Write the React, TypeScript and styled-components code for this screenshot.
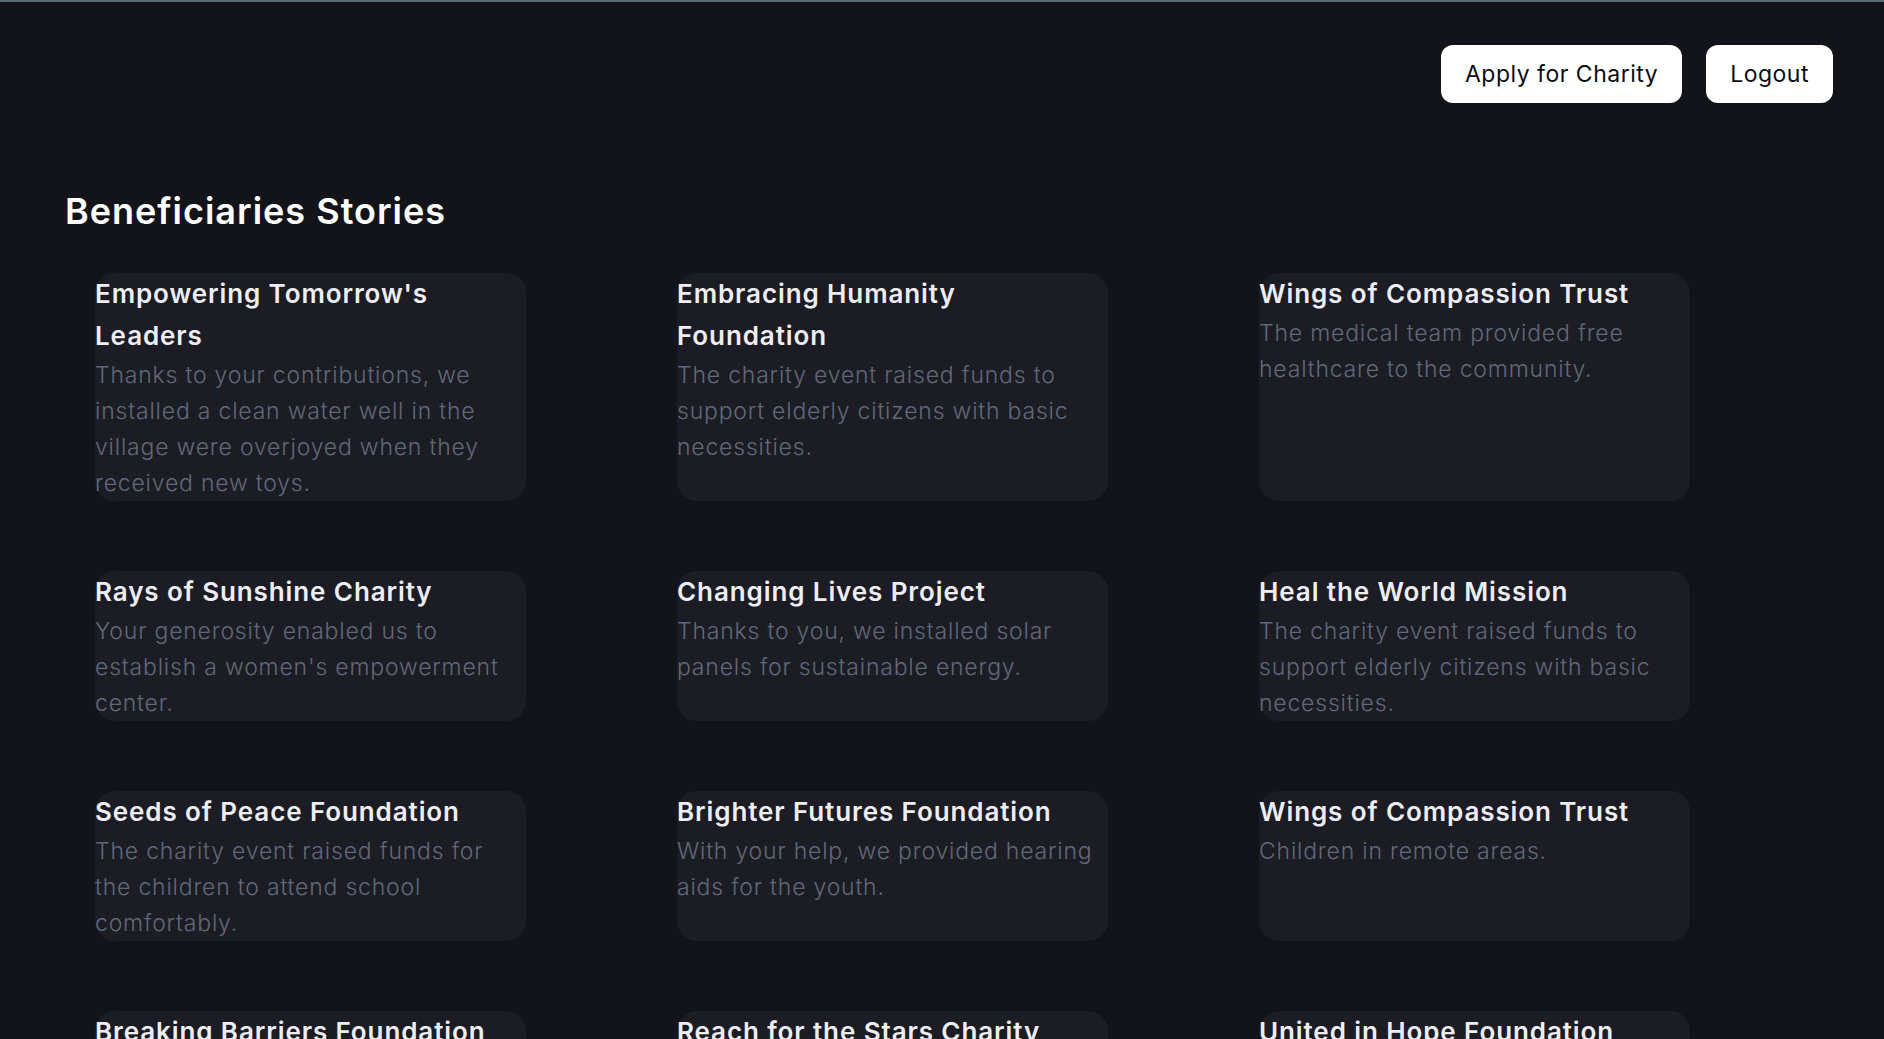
import React from "react";
import styled, { createGlobalStyle } from "styled-components";

const GlobalStyle = createGlobalStyle`
  html, body {
    margin: 0;
    padding: 0;
    background: #13141a;
  }
  body {
    border-top: 2px solid #5b6a72;
    font-family: Inter, "Noto Sans", sans-serif;
    color: #eeeef2;
    min-height: 100vh;
    box-sizing: border-box;
  }
  * { box-sizing: border-box; }
`;

const Page = styled.div`
  display: flex;
  flex-direction: column;
  min-height: 100vh;
`;

const TopBar = styled.header`
  display: flex;
  justify-content: flex-end;
  gap: 24px;
  padding: 43px 51px 0 0;
`;

const PillButton = styled.button`
  height: 58px;
  padding: 0 24px;
  border: none;
  border-radius: 12px;
  background: #ffffff;
  color: #0b0b14;
  font-family: Inter, "Noto Sans", sans-serif;
  font-size: 23px;
  letter-spacing: 0.5px;
  font-weight: 400;
  cursor: pointer;
`;

const Content = styled.main`
  padding: 0 65px 40px;
`;

const SectionTitle = styled.h2`
  margin: 86px 0 40px;
  font-size: 36px;
  line-height: 44px;
  font-weight: 600;
  color: #ffffff;
  letter-spacing: 1px;
`;

const StoryGrid = styled.div`
  display: grid;
  grid-template-columns: repeat(3, 431px);
  column-gap: 151px;
  row-gap: 70px;
  padding-left: 30px;
`;

const StoryCard = styled.article`
  background: #1c1c24;
  border-radius: 20px;
  display: flex;
  flex-direction: column;
`;

const StoryTitle = styled.h3`
  margin: 0;
  font-size: 26px;
  line-height: 42px;
  font-weight: 600;
  color: #eeeef2;
  letter-spacing: 0.9px;
`;

const StoryText = styled.p`
  margin: 0;
  font-size: 23px;
  line-height: 36px;
  font-weight: 300;
  color: #626879;
  letter-spacing: 0.8px;
`;

type Story = { title: string; text: string };

const stories: Story[] = [
  {
    title: "Empowering Tomorrow's Leaders",
    text: "Thanks to your contributions, we installed a clean water well in the village were overjoyed when they received new toys.",
  },
  {
    title: "Embracing Humanity Foundation",
    text: "The charity event raised funds to support elderly citizens with basic necessities.",
  },
  {
    title: "Wings of Compassion Trust",
    text: "The medical team provided free healthcare to the community.",
  },
  {
    title: "Rays of Sunshine Charity",
    text: "Your generosity enabled us to establish a women's empowerment center.",
  },
  {
    title: "Changing Lives Project",
    text: "Thanks to you, we installed solar panels for sustainable energy.",
  },
  {
    title: "Heal the World Mission",
    text: "The charity event raised funds to support elderly citizens with basic necessities.",
  },
  {
    title: "Seeds of Peace Foundation",
    text: "The charity event raised funds for the children to attend school comfortably.",
  },
  {
    title: "Brighter Futures Foundation",
    text: "With your help, we provided hearing aids for the youth.",
  },
  {
    title: "Wings of Compassion Trust",
    text: "Children in remote areas.",
  },
  {
    title: "Breaking Barriers Foundation",
    text: "The donations helped us build a new library for the local school.",
  },
  {
    title: "Reach for the Stars Charity",
    text: "Your support provided scholarships for deserving students.",
  },
  {
    title: "United in Hope Foundation",
    text: "We delivered food packages to families in need.",
  },
];

export default function App() {
  return (
    <>
      <GlobalStyle />
      <Page>
        <TopBar>
          <PillButton>Apply for Charity</PillButton>
          <PillButton>Logout</PillButton>
        </TopBar>
        <Content>
          <SectionTitle>Beneficiaries Stories</SectionTitle>
          <StoryGrid>
            {stories.map((s, i) => (
              <StoryCard key={i}>
                <StoryTitle>{s.title}</StoryTitle>
                <StoryText>{s.text}</StoryText>
              </StoryCard>
            ))}
          </StoryGrid>
        </Content>
      </Page>
    </>
  );
}
